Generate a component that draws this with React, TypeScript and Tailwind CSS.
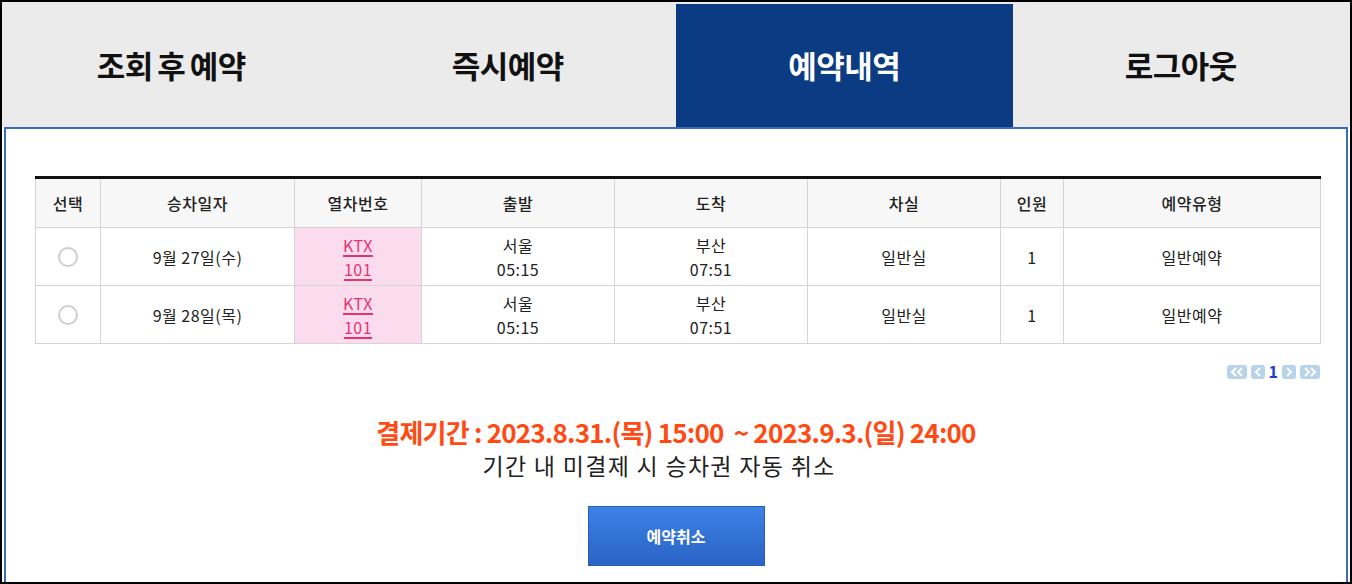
import React from 'react';

const tabs = [
  { label: '조회 후 예약', active: false },
  { label: '즉시예약', active: false },
  { label: '예약내역', active: true },
  { label: '로그아웃', active: false },
];

const rows = [
  { date: '9월 27일(수)' },
  { date: '9월 28일(목)' },
];

const Pager: React.FC<{ dir: 'first' | 'prev' | 'next' | 'last' }> = ({ dir }) => {
  const double = dir === 'first' || dir === 'last';
  const left = dir === 'first' || dir === 'prev';
  return (
    <span className={`flex h-[14px] items-center justify-center rounded-[3px] bg-[#b9d3ea] ${double ? 'w-[20px]' : 'w-[14px]'}`}>
      <svg width={double ? 14 : 8} height="10" viewBox={double ? '0 0 14 10' : '0 0 8 10'}>
        {left ? (
          <>
            <path d="M6 1 L2 5 L6 9" stroke="white" strokeWidth="2" fill="none" />
            {double && <path d="M12 1 L8 5 L12 9" stroke="white" strokeWidth="2" fill="none" />}
          </>
        ) : (
          <>
            <path d="M2 1 L6 5 L2 9" stroke="white" strokeWidth="2" fill="none" />
            {double && <path d="M8 1 L12 5 L8 9" stroke="white" strokeWidth="2" fill="none" />}
          </>
        )}
      </svg>
    </span>
  );
};

const App: React.FC = () => {
  return (
    <div className="w-[1352px] h-[584px] border-2 border-black bg-white flex flex-col overflow-hidden font-['Noto_Sans_CJK_KR',sans-serif]">
      {/* Tabs */}
      <div className="grid grid-cols-4 h-[125px] shrink-0 bg-[#ebebeb] pt-[2px] px-[1px]">
        {tabs.map((t) => (
          <div
            key={t.label}
            className={`flex items-center justify-center text-[31px] font-bold tracking-[-0.5px] [word-spacing:-2px] ${
              t.active ? 'bg-[#0b3b82] text-white' : 'text-[#111]'
            }`}
          >
            {t.label}
          </div>
        ))}
      </div>

      {/* Panel */}
      <div className="flex-1 mx-[2px] border-x-2 border-t-2 border-[#3c6bbd] flex flex-col">
        <div className="pl-[29px] pr-[25px] pt-[47px]">
          <table className="w-full border-collapse text-[16px] text-[#222] tracking-[0.5px]">
            <colgroup>
              <col className="w-[65px]" />
              <col className="w-[194px]" />
              <col className="w-[127px]" />
              <col className="w-[193px]" />
              <col className="w-[193px]" />
              <col className="w-[193px]" />
              <col className="w-[63px]" />
              <col />
            </colgroup>
            <thead>
              <tr className="h-[50px] bg-[#f7f7f7] border-t-[3px] border-t-[#111]">
                {['선택', '승차일자', '열차번호', '출발', '도착', '차실', '인원', '예약유형'].map((h) => (
                  <th key={h} className="border border-[#d4d4d4] border-t-0 font-medium">
                    {h}
                  </th>
                ))}
              </tr>
            </thead>
            <tbody>
              {rows.map((r) => (
                <tr key={r.date} className="h-[58px] text-center">
                  <td className="border border-[#d4d4d4]">
                    <span className="mx-auto block w-[20px] h-[20px] rounded-full border-2 border-[#cfcfcf]" />
                  </td>
                  <td className="border border-[#d4d4d4]">{r.date}</td>
                  <td className="border border-[#d4d4d4] bg-[#fbdcef] leading-[24px]">
                    <span className="text-[#e8326e] underline underline-offset-[3px] decoration-2">KTX</span>
                    <br />
                    <span className="text-[#e8326e] underline underline-offset-[3px] decoration-2">101</span>
                  </td>
                  <td className="border border-[#d4d4d4] leading-[24px]">
                    서울
                    <br />
                    05:15
                  </td>
                  <td className="border border-[#d4d4d4] leading-[24px]">
                    부산
                    <br />
                    07:51
                  </td>
                  <td className="border border-[#d4d4d4]">일반실</td>
                  <td className="border border-[#d4d4d4]">1</td>
                  <td className="border border-[#d4d4d4]">일반예약</td>
                </tr>
              ))}
            </tbody>
          </table>

          {/* Pagination */}
          <div className="flex justify-end items-center gap-[4px] mt-[21px] pr-[1px]">
            <Pager dir="first" />
            <Pager dir="prev" />
            <span className="text-[16px] font-bold text-[#1a3fd6] leading-none -mt-[2px]">1</span>
            <Pager dir="next" />
            <Pager dir="last" />
          </div>
        </div>

        {/* Payment notice */}
        <div className="flex flex-col items-center mt-[36px]">
          <p className="text-[26px] font-bold text-[#ff4a14] tracking-[-0.8px] leading-[34px] whitespace-pre">
            {'결제기간 : 2023.8.31.(목) 15:00  ~ 2023.9.3.(일) 24:00'}
          </p>
          <p className="text-[23px] text-[#222] tracking-[1.3px] leading-[30px] mt-[1px] mr-[34px]">기간 내 미결제 시 승차권 자동 취소</p>
          <button className="mt-[26px] w-[177px] h-[60px] bg-gradient-to-b from-[#3d82e6] to-[#2b63c6] border border-[#2a5cb4] text-white text-[16px] font-bold">
            예약취소
          </button>
        </div>
      </div>
    </div>
  );
};

export default App;
